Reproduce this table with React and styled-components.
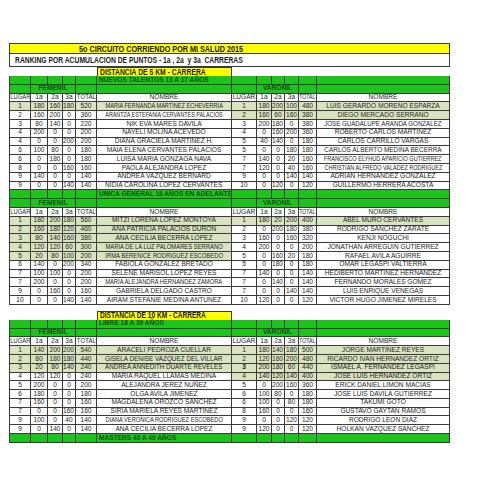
import React from 'react';
import styled, { createGlobalStyle } from 'styled-components';

const WIDTHS = [22, 17, 15, 13, 21, 135, 25, 15, 13, 14, 18, 133];
const COLS = WIDTHS.map((w) => `${w}px`).join(' ');
const LINE = '#3a3a3a';
const GREEN = '#1cc41c';
const SHADE = '#d9e3bf';
const FONT = '"Liberation Sans", Arial, sans-serif';

const GlobalStyle = createGlobalStyle`
  html, body {
    margin: 0;
    background: #fff;
  }
  body {
    font-family: ${FONT};
  }
`;

const ctx = typeof document !== 'undefined' ? document.createElement('canvas').getContext('2d') : null;
const fitScale = (text, px, weight, max) => {
  if (!ctx || !max) return 1;
  ctx.font = `${weight} ${px}px "Liberation Sans"`;
  const w = ctx.measureText(String(text)).width;
  return w > max ? max / w : 1;
};

const Squeeze = styled.span`
  display: inline-block;
  white-space: pre;
  transform-origin: ${(p) => (p.$left ? 'left' : 'center')} center;
`;

const FitText = ({ text, px, weight = 400, max, left }) => {
  const s = fitScale(text, px, weight, max);
  return (
    <Squeeze $left={left} style={s < 1 ? { transform: `scaleX(${s})` } : undefined}>
      {text}
    </Squeeze>
  );
};

const Page = styled.div`
  padding: 43px 0 0 9px;
`;

const Sheet = styled.div`
  width: 441px;
`;

const TitleBar = styled.div`
  height: 11px;
  box-sizing: border-box;
  background: #ffff00;
  border: 1px solid ${LINE};
  padding-left: 69px;
  display: flex;
  align-items: center;
  font-size: 9.4px;
  line-height: 1;
  font-weight: 700;
  color: #1a1a1a;
`;

const RankingBar = styled.div`
  height: 13px;
  box-sizing: border-box;
  border: 1px solid ${LINE};
  border-top: none;
  padding-left: 5px;
  display: flex;
  align-items: center;
  font-size: 8.8px;
  line-height: 1;
  font-weight: 700;
  color: #1a1a1a;
`;

const Row = styled.div`
  display: grid;
  grid-template-columns: ${COLS};
  height: ${(p) => p.$h || 8.8}px;
`;

const Cell = styled.div`
  box-sizing: border-box;
  grid-column: span ${(p) => p.$span || 1};
  border-right: 1px solid ${LINE};
  border-bottom: 1px solid ${LINE};
  &:first-child {
    border-left: 1px solid ${LINE};
  }
  background: ${(p) => p.$bg || '#fff'};
  display: flex;
  align-items: center;
  justify-content: ${(p) => (p.$left ? 'flex-start' : 'center')};
  padding-left: ${(p) => (p.$left ? '2px' : '0')};
  font-size: 6.6px;
  line-height: 1;
  white-space: nowrap;
  overflow: visible;
  color: #1e1e1e;
  font-weight: ${(p) => (p.$bold ? 700 : 400)};
`;

const GreenCell = styled(Cell)`
  background: ${GREEN};
  color: #0b560b;
  font-weight: 700;
  font-size: 6.6px;
`;

const Blank = styled.div`
  grid-column: span ${(p) => p.$span || 1};
  background: #fff;
`;

const DistanceCell = styled.div`
  box-sizing: border-box;
  background: #ffff00;
  border: 1px solid ${LINE};
  border-bottom: none;
  display: flex;
  align-items: center;
  padding-left: 2px;
  font-size: 8.6px;
  line-height: 1;
  font-weight: 700;
  color: #1a1a1a;
  overflow: hidden;
`;

const Spacer = styled.div`
  height: 6px;
`;

const sections = [
  {
    category: 'NUEVOS TALENTOS 13 A 17 AÑOS',
    shade: [1, 2],
    fem: [
      ['1', 180, 160, 180, 520, 'MARIA FERNANDA MARTINEZ ECHEVERRIA'],
      ['2', 160, 200, 0, 360, 'ARANTZA ESTEFANIA CERVANTES PALACIOS'],
      ['3', 80, 140, 0, 220, 'NIK EVA MARES DAVILA'],
      ['4', 200, 0, 0, 200, 'NAYELI MOLINA ACEVEDO'],
      ['4', 0, 0, 200, 200, 'DIANA GRACIELA MARTINEZ H.'],
      ['6', 100, 80, 0, 180, 'MAIA ELENA CERVANTES PALACIOS'],
      ['6', 0, 180, 0, 180, 'LUISA MARIA GONZAGA NAVA'],
      ['8', 0, 0, 160, 160, 'PAOLA ALEJANDRA LOPEZ'],
      ['9', 140, 0, 0, 140, 'ANDREA VAZQUEZ BERNARD'],
      ['9', 0, 0, 140, 140, 'NIDIA CAROLINA LOPEZ CERVANTES'],
    ],
    var: [
      ['1', 180, 200, 100, 480, 'LUIS GERARDO MORENO ESPARZA'],
      ['2', 160, 60, 160, 380, 'DIEGO MERCADO SERRANO'],
      ['3', 200, 180, 0, 380, 'JOSE GUADALUPE ARANDA GONZALEZ'],
      ['4', 0, 160, 200, 360, 'ROBERTO CARLOS MARTINEZ'],
      ['5', 40, 140, 0, 180, 'CARLOS CARRILLO VARGAS'],
      ['5', 0, 0, 180, 180, 'CARLOS ALBERTO MEDINA BECERRA'],
      ['7', 140, 0, 20, 160, 'FRANCISCO ELYHUD APARICIO GUTIERREZ'],
      ['7', 120, 0, 40, 160, 'CHRISTIAN ALFREDO VALADEZ RODRIGUEZ'],
      ['9', 0, 0, 140, 140, 'ADRIAN HERNANDEZ GONZALEZ'],
      ['10', 0, 120, 0, 120, 'GUILLERMO HERRERA ACOSTA'],
    ],
  },
  {
    category: 'UNICA GENERAL 18 AÑOS EN ADELANTE',
    shade: [5, 1],
    fem: [
      ['1', 180, 200, 180, 560, 'MITZI LORENA LOPEZ MONTOYA'],
      ['2', 160, 180, 120, 460, 'ANA PATRICIA PALACIOS DURON'],
      ['3', 80, 140, 160, 380, 'ANA CECILIA BECERRA LOPEZ'],
      ['4', 120, 120, 60, 300, 'MARIA DE LA LUZ PALOMARES SERRANO'],
      ['5', 20, 80, 100, 200, 'IRMA BERENICE RODRIGUEZ ESCOBEDO'],
      ['6', 140, 0, 200, 340, 'FABIOLA GONZALEZ BRETADO'],
      ['7', 100, 100, 0, 200, 'SELENE MARISOL LOPEZ REYES'],
      ['7', 200, 0, 0, 200, 'MARIA ALEJANDRA HERNANDEZ ZAMORA'],
      ['9', 0, 160, 0, 160, 'GABRIELA DELGADO CASTRO'],
      ['10', 0, 0, 140, 140, 'AIRAM STEFANIE MEDINA ANTUNEZ'],
    ],
    var: [
      ['1', 180, 20, 200, 400, 'ABEL MURO CERVANTES'],
      ['2', 0, 200, 180, 380, 'RODRIGO SANCHEZ ZARATE'],
      ['3', 160, 0, 160, 320, 'KENJI NOGUCHI'],
      ['4', 200, 0, 0, 200, 'JONATHAN ARREGUIN GUTIERREZ'],
      ['5', 0, 160, 20, 180, 'RAFAEL AVILA AGUIRRE'],
      ['5', 0, 180, 0, 180, 'OMAR LEGASPI VALTIERRA'],
      ['7', 140, 0, 0, 140, 'HEDIBERTO MARTINEZ HERNANDEZ'],
      ['7', 0, 140, 0, 140, 'FERNANDO MORALES GOMEZ'],
      ['7', 0, 0, 140, 140, 'LUIS ENRIQUE VENEGAS'],
      ['10', 120, 0, 0, 120, 'VICTOR HUGO JIMENEZ MIRELES'],
    ],
  },
  {
    distance: 'DISTANCIA DE 10 KM - CARRERA',
    category: 'LIBRE 18 A 39 AÑOS',
    shade: [3, 4],
    fem: [
      ['1', 140, 200, 200, 540, 'ARACELI PEDROZA CUELLAR'],
      ['2', 80, 180, 180, 440, 'GISELA DENISE VAZQUEZ DEL VILLAR'],
      ['3', 20, 80, 140, 240, 'ANDREA ANNEDITH DUARTE REVELES'],
      ['4', 120, 120, 0, 240, 'MARIA RAQUEL LLAMAS MEDINA'],
      ['5', 200, 0, 0, 200, 'ALEJANDRA JEREZ NUÑEZ'],
      ['6', 180, 0, 0, 180, 'OLGA AVILA JIMENEZ'],
      ['7', 160, 0, 0, 160, 'MAGDALENA OROZCO SANCHEZ'],
      ['7', 0, 0, 160, 160, 'SIRIA MARIELA REYES MARTINEZ'],
      ['9', 100, 0, 40, 140, 'DIANA VERONICA RODRIGUEZ ESCOBEDO'],
      ['9', 0, 140, 0, 140, 'ANA CECILIA BECERRA LOPEZ'],
    ],
    var: [
      ['1', 180, 140, 180, 500, 'JORGE MARTINEZ REYES'],
      ['2', 120, 160, 200, 480, 'RICARDO IVAN HERNANDEZ ORTIZ'],
      ['3', 200, 180, 60, 440, 'ISMAEL A. FERNANDEZ LEGASPI', true],
      ['4', 140, 120, 140, 400, 'JOSE LUIS HERNANDEZ ORTIZ'],
      ['5', 0, 200, 160, 360, 'ERICK DANIEL LIMON MACIAS'],
      ['6', 100, 80, 0, 180, 'JOSE LUIS DAVILA GUTIERREZ'],
      ['6', 100, 0, 80, 180, 'TAKUMI GOTO'],
      ['8', 160, 0, 0, 160, 'GUSTAVO GAYTAN RAMOS'],
      ['9', 0, 0, 120, 120, 'RODRIGO LEON DIAZ'],
      ['9', 120, 0, 0, 120, 'HOLKAN VAZQUEZ SANCHEZ'],
    ],
  },
];

const maxFor = (col) => (col % 6 === 5 ? 118 : WIDTHS[col] - 2);

const DistanceRow = ({ text }) => (
  <Row $h={9}>
    <Blank $span={5} />
    <DistanceCell>
      <FitText text={text} px={8.6} weight={700} max={106} left />
    </DistanceCell>
    <Blank $span={6} />
  </Row>
);

const CategoryRow = ({ text }) => (
  <Row>
    {WIDTHS.map((_, i) => (
      <GreenCell key={i} $left={i === 5}>
        {i === 5 ? text : ''}
      </GreenCell>
    ))}
  </Row>
);

const GenderRow = () => (
  <Row>
    <GreenCell />
    <GreenCell $span={3}>FEMENIL</GreenCell>
    <GreenCell />
    <GreenCell />
    <GreenCell />
    <GreenCell $span={3}>VARONIL</GreenCell>
    <GreenCell />
    <GreenCell />
  </Row>
);

const HEAD = ['LUGAR', '1a', '2a', '3a', 'TOTAL', 'NOMBRE'];

const HeaderRow = () => (
  <Row>
    {[...HEAD, ...HEAD].map((h, i) => (
      <Cell key={i}>
        <FitText text={h} px={6.6} max={maxFor(i)} />
      </Cell>
    ))}
  </Row>
);

const Half = ({ data, shaded, offset }) =>
  data.slice(0, 6).map((v, i) => {
    const bold = i === 0 && data[6];
    return (
      <Cell key={i} $bg={shaded ? SHADE : '#fff'} $bold={bold}>
        <FitText text={v} px={6.6} weight={bold ? 700 : 400} max={maxFor(offset + i)} />
      </Cell>
    );
  });

const Section = ({ section }) => (
  <>
    {section.distance && (
      <>
        <Spacer />
        <DistanceRow text={section.distance} />
      </>
    )}
    <CategoryRow text={section.category} />
    <GenderRow />
    <HeaderRow />
    {section.fem.map((f, i) => (
      <Row key={i}>
        <Half data={f} shaded={i < section.shade[0]} offset={0} />
        <Half data={section.var[i]} shaded={i < section.shade[1]} offset={6} />
      </Row>
    ))}
  </>
);

export default function App() {
  return (
    <Page>
      <GlobalStyle />
      <Sheet>
        <TitleBar>
          <FitText text="5o CIRCUITO CORRIENDO POR MI SALUD 2015" px={9.4} weight={700} max={164} left />
        </TitleBar>
        <RankingBar>
          <FitText
            text="RANKING POR ACUMULACION DE PUNTOS - 1a , 2a  y 3a  CARRERAS"
            px={8.8}
            weight={700}
            max={228}
            left
          />
        </RankingBar>
        <DistanceRow text="DISTANCIA DE 5 KM - CARRERA" />
        {sections.map((s, i) => (
          <Section key={i} section={s} />
        ))}
        <CategoryRow text="MASTERS 40 A 49 AÑOS" />
      </Sheet>
    </Page>
  );
}
